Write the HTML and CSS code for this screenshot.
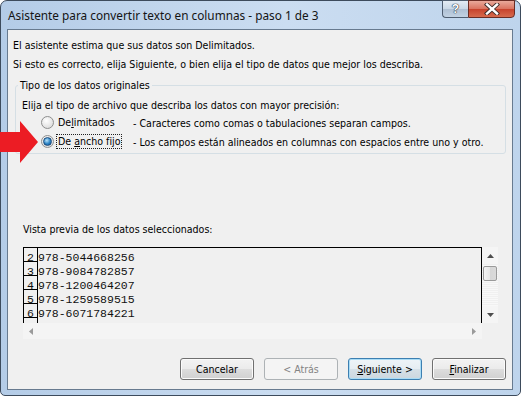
FILE: index.html
```html
<!DOCTYPE html>
<html lang="es">
<head>
  <meta charset="UTF-8">
  <title>Asistente para convertir texto en columnas</title>
  <link rel="stylesheet" href="styles.css">
</head>
<body>
  <div class="window">
    <div class="titlebar">
      <span class="title">Asistente para convertir texto en columnas - paso 1 de 3</span>
      <div class="caption-buttons">
        <button class="cap help">?</button>
        <button class="cap close">
          <svg width="16" height="12" viewBox="0 0 16 12">
            <path d="M3 1.5 L13 10.5 M13 1.5 L3 10.5" stroke="#3b2a28" stroke-width="4.2" stroke-linecap="square"/>
            <path d="M3 1.5 L13 10.5 M13 1.5 L3 10.5" stroke="#ffffff" stroke-width="2.4" stroke-linecap="square"/>
          </svg>
        </button>
      </div>
    </div>

    <div class="client">
      <p class="line first">El asistente estima que sus datos son Delimitados.</p>
      <p class="line">Si esto es correcto, elija Siguiente, o bien elija el tipo de datos que mejor los describa.</p>

      <fieldset class="group">
        <legend>Tipo de los datos originales</legend>
        <p class="hint">Elija el tipo de archivo que describa los datos con mayor precisión:</p>
        <div class="option">
          <span class="radio"></span>
          <span class="label-cell"><span class="label">De<u>l</u>imitados</span></span>
          <span class="desc">- Caracteres como comas o tabulaciones separan campos.</span>
        </div>
        <div class="option">
          <span class="radio checked"></span>
          <span class="label-cell"><span class="label focus">De <u>a</u>ncho fijo</span></span>
          <span class="desc">- Los campos están alineados en columnas con espacios entre uno y otro.</span>
        </div>
      </fieldset>

      <p class="line preview-label">Vista previa de los datos seleccionados:</p>

      <div class="preview">
        <div class="data">
          <div class="row"><span class="num">2</span><span class="val">978-5044668256</span></div>
          <div class="row"><span class="num">3</span><span class="val">978-9084782857</span></div>
          <div class="row"><span class="num">4</span><span class="val">978-1200464207</span></div>
          <div class="row"><span class="num">5</span><span class="val">978-1259589515</span></div>
          <div class="row"><span class="num">6</span><span class="val">978-6071784221</span></div>
          <div class="row"><span class="num"></span><span class="val"></span></div>
        </div>
        <div class="vscroll">
          <span class="sb-btn">
            <svg width="7" height="4" viewBox="0 0 7 4"><polygon points="3.5,0 7,4 0,4" fill="#4d4d4d"/></svg>
          </span>
          <span class="track"><span class="thumb"></span></span>
          <span class="sb-btn">
            <svg width="7" height="4" viewBox="0 0 7 4"><polygon points="0,0 7,0 3.5,4" fill="#4d4d4d"/></svg>
          </span>
        </div>
        <div class="hscroll">
          <span class="sb-btn">
            <svg width="4" height="7" viewBox="0 0 4 7"><polygon points="4,0 4,7 0,3.5" fill="#9a9a9a"/></svg>
          </span>
          <span class="sb-btn">
            <svg width="4" height="7" viewBox="0 0 4 7"><polygon points="0,0 4,3.5 0,7" fill="#9a9a9a"/></svg>
          </span>
        </div>
        <div class="corner"></div>
      </div>

      <div class="buttons">
        <button class="btn">Cancelar</button>
        <button class="btn" disabled>&lt; Atrás</button>
        <button class="btn default"><u>S</u>iguiente &gt;</button>
        <button class="btn"><u>F</u>inalizar</button>
      </div>
    </div>

    <!-- red pointer drawn over the dialog -->
    <svg class="pointer" width="39" height="43" viewBox="0 0 39 43">
      <polygon points="0,11 20,11 20,0 38,21 20,42 20,31 0,31" fill="#ec1c24"/>
    </svg>
  </div>
</body>
</html>
```

FILE: styles.css
```css
/* Reset styles */
* {
  box-sizing: border-box;
  margin: 0;
  padding: 0;
}

body {
  background-color: #ffffff;
  font-family: "DejaVu Sans Condensed", "DejaVu Sans", sans-serif;
  font-size: 10.55px;
  color: #000000;
}

/* Window frame */
.window {
  position: relative;
  width: 521px;
  height: 396px;
  display: flex;
  flex-direction: column;
  padding: 0 7px 5px 6px;
  border: 1px solid #3d4b5c;
  border-radius: 7px 7px 5px 5px;
  background: linear-gradient(90deg, #b4cce7, #cbddf1 55%, #bed4ec);
}

.titlebar {
  height: 28px;
  display: flex;
  justify-content: space-between;
  align-items: flex-start;
  margin: 0 -7px 0 -6px;
  padding: 0 5px 0 7px;
}

.title {
  font-family: "Noto Sans", sans-serif;
  font-size: 11.8px;
  line-height: 28px;
  color: #141414;
}

.caption-buttons {
  display: flex;
}

.cap {
  height: 18px;
  margin-top: -1px;
  border: 1px solid #4e5d70;
  display: flex;
  align-items: center;
  justify-content: center;
}

.help {
  width: 26px;
  border-right: none;
  border-radius: 0 0 0 4px;
  background: linear-gradient(#e3ebf4, #c9d7e6 50%, #aebfd3 51%, #c2d2e3);
  font-family: "Liberation Sans", sans-serif;
  font-weight: bold;
  font-size: 12px;
  color: #ffffff;
  text-shadow: 0 0 1px #2c3744, 0 0 1px #2c3744, 0 0 1px #2c3744;
}

.close {
  width: 47px;
  border-color: #6a2c24;
  border-radius: 0 0 4px 0;
  background: linear-gradient(#e9a99b, #d9725f 50%, #c7422c 51%, #d66a4d);
}

/* Client area */
.client {
  flex: 1;
  display: flex;
  flex-direction: column;
  border: 1px solid #677a8f;
  background-color: #f0f0f0;
}

.line {
  line-height: 13px;
  margin: 6px 0 0 5px;
}

.line.first {
  margin-top: 9px;
}

/* Group box */
.group {
  margin: 8px 6px 0 7px;
  padding: 0 0 2px 6px;
  border: 1px solid #d5dfe5;
  border-radius: 3px;
}

.group legend {
  line-height: 13px;
  margin-left: -4px;
  padding: 0 2px;
}

.hint {
  line-height: 13px;
  margin-top: 7px;
}

.option {
  display: flex;
  align-items: center;
  height: 19px;
  padding-left: 19px;
}

.option:first-of-type {
  margin-top: 1px;
}

.radio {
  width: 13px;
  height: 13px;
  border: 1px solid #8e8f8f;
  border-radius: 50%;
  background: radial-gradient(circle at 40% 35%, #ffffff, #dcdcdc 80%);
  display: flex;
  align-items: center;
  justify-content: center;
}

.radio.checked::after {
  content: "";
  width: 7px;
  height: 7px;
  border-radius: 50%;
  border: 1px solid #1c4c7c;
  background: radial-gradient(circle at 40% 35%, #b9e4fb, #2a82c4 55%, #175090);
}

.label-cell {
  width: 77px;
  margin-left: 2px;
}

.label {
  display: inline-block;
  line-height: 13px;
  padding: 0 1px;
  border: 1px solid transparent;
}

.label.focus {
  border: 1px dotted #202020;
}

/* Data preview */
.preview-label {
  margin-top: 69px;
  margin-left: 15px;
}

.preview {
  margin: 11px 0 0 15px;
  width: 475px;
  height: 92px;
  display: grid;
  grid-template-columns: 1fr 16px;
  grid-template-rows: 1fr 16px;
}

.data {
  border: 1px solid #000000;
  border-bottom: none;
  overflow: hidden;
  font-family: "Liberation Mono", monospace;
  font-size: 11.5px;
  color: #111111;
}

.row {
  display: flex;
  height: 14px;
  line-height: 19px;
}

.num {
  width: 14px;
  border-right: 1px solid #000000;
  border-bottom: 1px solid #000000;
  text-align: center;
}

.row:last-child .num {
  border-bottom: none;
}

.val {
  white-space: pre;
}

.vscroll {
  display: flex;
  flex-direction: column;
  background-color: #f5f5f5;
}

.sb-btn {
  display: flex;
  align-items: center;
  justify-content: center;
  width: 16px;
  height: 17px;
}

.track {
  flex: 1;
  padding: 2px 0 0 1px;
  background-image: repeating-linear-gradient(#f0f0f0 0 1px, #f8f8f8 1px 2px);
}

.thumb {
  display: block;
  width: 14px;
  height: 15px;
  border: 1px solid #9a9a9a;
  border-radius: 2px;
  background: linear-gradient(90deg, #f4f4f4, #e6e6e6 50%, #d6d6d6 51%, #dadada);
}

.hscroll {
  display: flex;
  justify-content: space-between;
  background-color: #f4f4f4;
}

.hscroll .sb-btn {
  height: 16px;
}

.corner {
  background-color: #f0f0f0;
}

/* Dialog buttons */
.buttons {
  display: flex;
  justify-content: flex-end;
  gap: 10px;
  margin-top: 19px;
  padding-right: 6px;
}

.btn {
  width: 74px;
  height: 22px;
  font: inherit;
  color: #000000;
  border: 1px solid #707070;
  border-radius: 3px;
  box-shadow: inset 0 0 0 1px #fbfbfb;
  background: linear-gradient(#f3f3f3, #ebebeb 50%, #dddddd 51%, #d0d0d0);
}

.btn:disabled {
  color: #838383;
  border-color: #adb2b5;
  box-shadow: none;
  background: #f4f4f4;
}

.btn.default {
  border-color: #3c7fb1;
  box-shadow: inset 0 0 0 1px #a9dcf6;
  background: linear-gradient(#eef4f8, #e6edf2 50%, #d6e0e7 51%, #ccd7df);
}

.pointer {
  position: absolute;
  left: -1px;
  top: 120px;
}
```
